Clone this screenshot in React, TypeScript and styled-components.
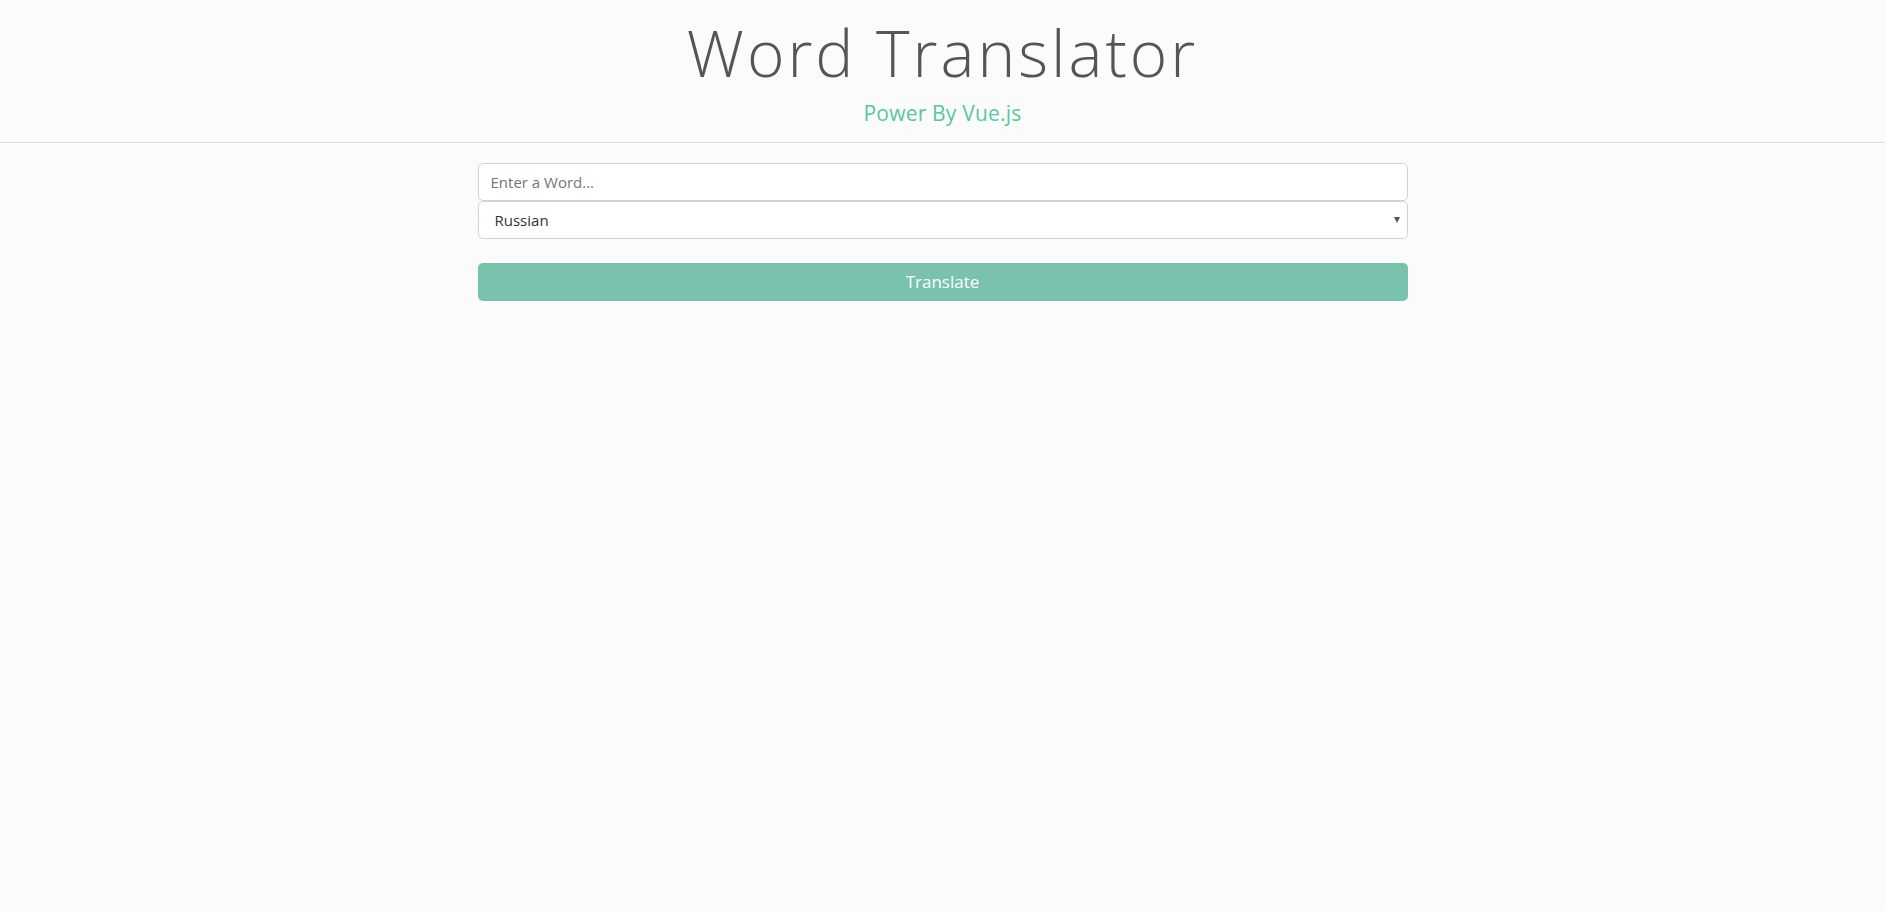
import React from "react";
import styled, { createGlobalStyle } from "styled-components";

const Global = createGlobalStyle`
  html, body { margin: 0; padding: 0; background: #fbfbfb; }
  body { font-family: "Open Sans", "Noto Sans", sans-serif; }
  * { box-sizing: border-box; }
`;

const Header = styled.header`
  padding: 21px 0 18px;
  border-bottom: 1px solid #dcdcdc;
  text-align: center;
`;

const Title = styled.h1`
  margin: 0;
  font-family: "Open Sans", sans-serif;
  font-weight: 300;
  font-size: 64px;
  line-height: 64px;
  letter-spacing: 3px;
  color: #555555;
`;

const Subtitle = styled.p`
  margin: 18px 0 0;
  font-family: "Open Sans", sans-serif;
  font-weight: 400;
  font-size: 21px;
  line-height: 21px;
  letter-spacing: 0.2px;
  color: #55ca9b;
`;

const Main = styled.main`
  width: 930px;
  margin: 20px auto 0;
  display: flex;
  flex-direction: column;
`;

const Field = styled.input`
  height: 38px;
  padding: 0 12px;
  border: 1px solid #cfd3d8;
  border-radius: 5px;
  background: #fff;
  font-family: "Open Sans", sans-serif;
  font-size: 15px;
  color: #444;
  outline: none;
  &::placeholder { color: #757575; }
`;

const SelectWrap = styled.div`
  position: relative;
`;

const Select = styled.select`
  width: 100%;
  height: 38px;
  padding: 0 16px;
  border: 1px solid #cfd3d8;
  border-radius: 5px;
  background: #fff;
  font-family: "Open Sans", sans-serif;
  font-size: 15px;
  color: #333;
  appearance: none;
  outline: none;
`;

const Caret = styled.span`
  position: absolute;
  right: 8px;
  top: 50%;
  transform: translateY(-50%);
  width: 0;
  height: 0;
  border-left: 3px solid transparent;
  border-right: 3px solid transparent;
  border-top: 6px solid #555;
  pointer-events: none;
`;

const Button = styled.button`
  margin-top: 24px;
  height: 38px;
  border: none;
  border-radius: 5px;
  background: #79c2ad;
  color: #fff;
  font-family: "Open Sans", sans-serif;
  font-size: 17px;
  line-height: 38px;
  padding: 0 0 2px;
  cursor: pointer;
`;

export default function App() {
  return (
    <>
      <Global />
      <Header>
        <Title>Word Translator</Title>
        <Subtitle>Power By Vue.js</Subtitle>
      </Header>
      <Main>
        <Field placeholder="Enter a Word..." />
        <SelectWrap>
          <Select defaultValue="ru">
            <option value="ru">Russian</option>
            <option value="fr">French</option>
            <option value="de">German</option>
            <option value="es">Spanish</option>
          </Select>
          <Caret />
        </SelectWrap>
        <Button>Translate</Button>
      </Main>
    </>
  );
}
